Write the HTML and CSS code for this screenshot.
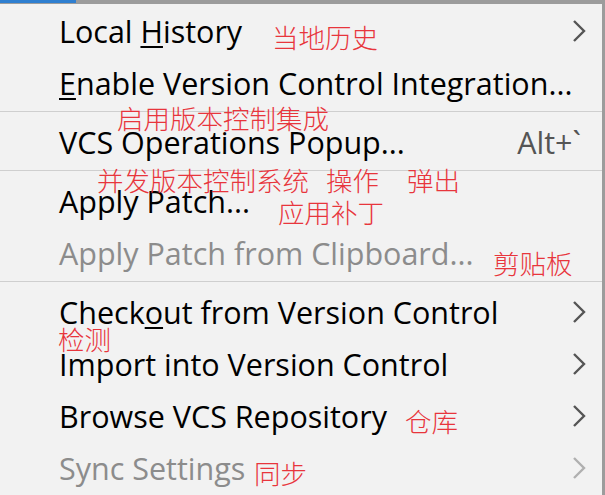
FILE: index.html
```html
<!DOCTYPE html>
<html lang="en">
<head>
  <meta charset="UTF-8" />
  <title>VCS Menu</title>
  <link rel="stylesheet" href="styles.css">
</head>
<body>
  <div class="topbar"><span class="tab"></span></div>
  <div class="menu">
    <div class="item">
      <span class="label">Local <u>H</u>istory</span>
      <svg class="arrow" viewBox="0 0 16 24"><path d="M3 2 L13 12 L3 22" /></svg>
    </div>
    <div class="item">
      <span class="label"><u>E</u>nable Version Control Integration...</span>
    </div>
    <div class="sep"></div>
    <div class="item">
      <span class="label">VCS Operations Popup...</span>
      <span class="shortcut">Alt+`</span>
    </div>
    <div class="sep"></div>
    <div class="item">
      <span class="label">Apply Patch...</span>
    </div>
    <div class="item disabled">
      <span class="label">Apply Patch from Clipboard...</span>
    </div>
    <div class="sep"></div>
    <div class="item">
      <span class="label">Check<u>o</u>ut from Version Control</span>
      <svg class="arrow" viewBox="0 0 16 24"><path d="M3 2 L13 12 L3 22" /></svg>
    </div>
    <div class="item">
      <span class="label">Import into Version Control</span>
      <svg class="arrow" viewBox="0 0 16 24"><path d="M3 2 L13 12 L3 22" /></svg>
    </div>
    <div class="item">
      <span class="label">Browse VCS Repository</span>
      <svg class="arrow" viewBox="0 0 16 24"><path d="M3 2 L13 12 L3 22" /></svg>
    </div>
    <div class="item disabled">
      <span class="label">Sync Settings</span>
      <svg class="arrow" viewBox="0 0 16 24"><path d="M3 2 L13 12 L3 22" /></svg>
    </div>

    <!-- handwritten translations laid over the menu -->
    <span class="note" style="left:272px; top:16px">当地历史</span>
    <span class="note" style="left:117px; top:97px">启用版本控制集成</span>
    <span class="note" style="left:97px; top:159px">并发版本控制系统</span>
    <span class="note" style="left:326px; top:159px">操作</span>
    <span class="note" style="left:407px; top:159px">弹出</span>
    <span class="note" style="left:278px; top:191px">应用补丁</span>
    <span class="note" style="left:493px; top:242px">剪贴板</span>
    <span class="note" style="left:58px; top:318px">检测</span>
    <span class="note" style="left:405px; top:400px">仓库</span>
    <span class="note" style="left:254px; top:452px">同步</span>
  </div>
</body>
</html>
```

FILE: styles.css
```css
body {
  margin: 0;
  background: #f2f2f2;
  font-family: 'Open Sans', 'Noto Sans', sans-serif;
  color: #000;
  overflow: hidden;
}
.topbar {
  height: 4px;
  background: #9c9c9c;
}
.tab {
  display: block;
  width: 76px;
  height: 3px;
  background: #2f7fd0;
}
.menu {
  position: relative;
  height: 491px;
  padding-top: 1px;
  border-right: 3px solid #9c9c9c;
  box-sizing: border-box;
}
.item {
  display: flex;
  align-items: center;
  height: 52px;
  padding-left: 59px;
  padding-right: 15px;
  font-size: 30.5px;
}
.label {
  flex: 1;
  white-space: nowrap;
}
.label u {
  text-decoration-thickness: 2px;
  text-underline-offset: 3px;
}
.shortcut {
  color: #555;
  padding-right: 6px;
}
.arrow {
  width: 16px;
  height: 24px;
}
.arrow path {
  fill: none;
  stroke: #555;
  stroke-width: 2.4;
}
.disabled {
  color: #8c8c8c;
}
.disabled .arrow path {
  stroke: #b0b0b0;
}
.sep {
  height: 1px;
  background: #cfcfcf;
  margin: 2px 0 4px;
}
.note {
  position: absolute;
  font-family: 'Noto Sans CJK SC', sans-serif;
  font-weight: 300;
  font-size: 26.5px;
  line-height: 34px;
  color: #e8353c;
  white-space: nowrap;
}
```
